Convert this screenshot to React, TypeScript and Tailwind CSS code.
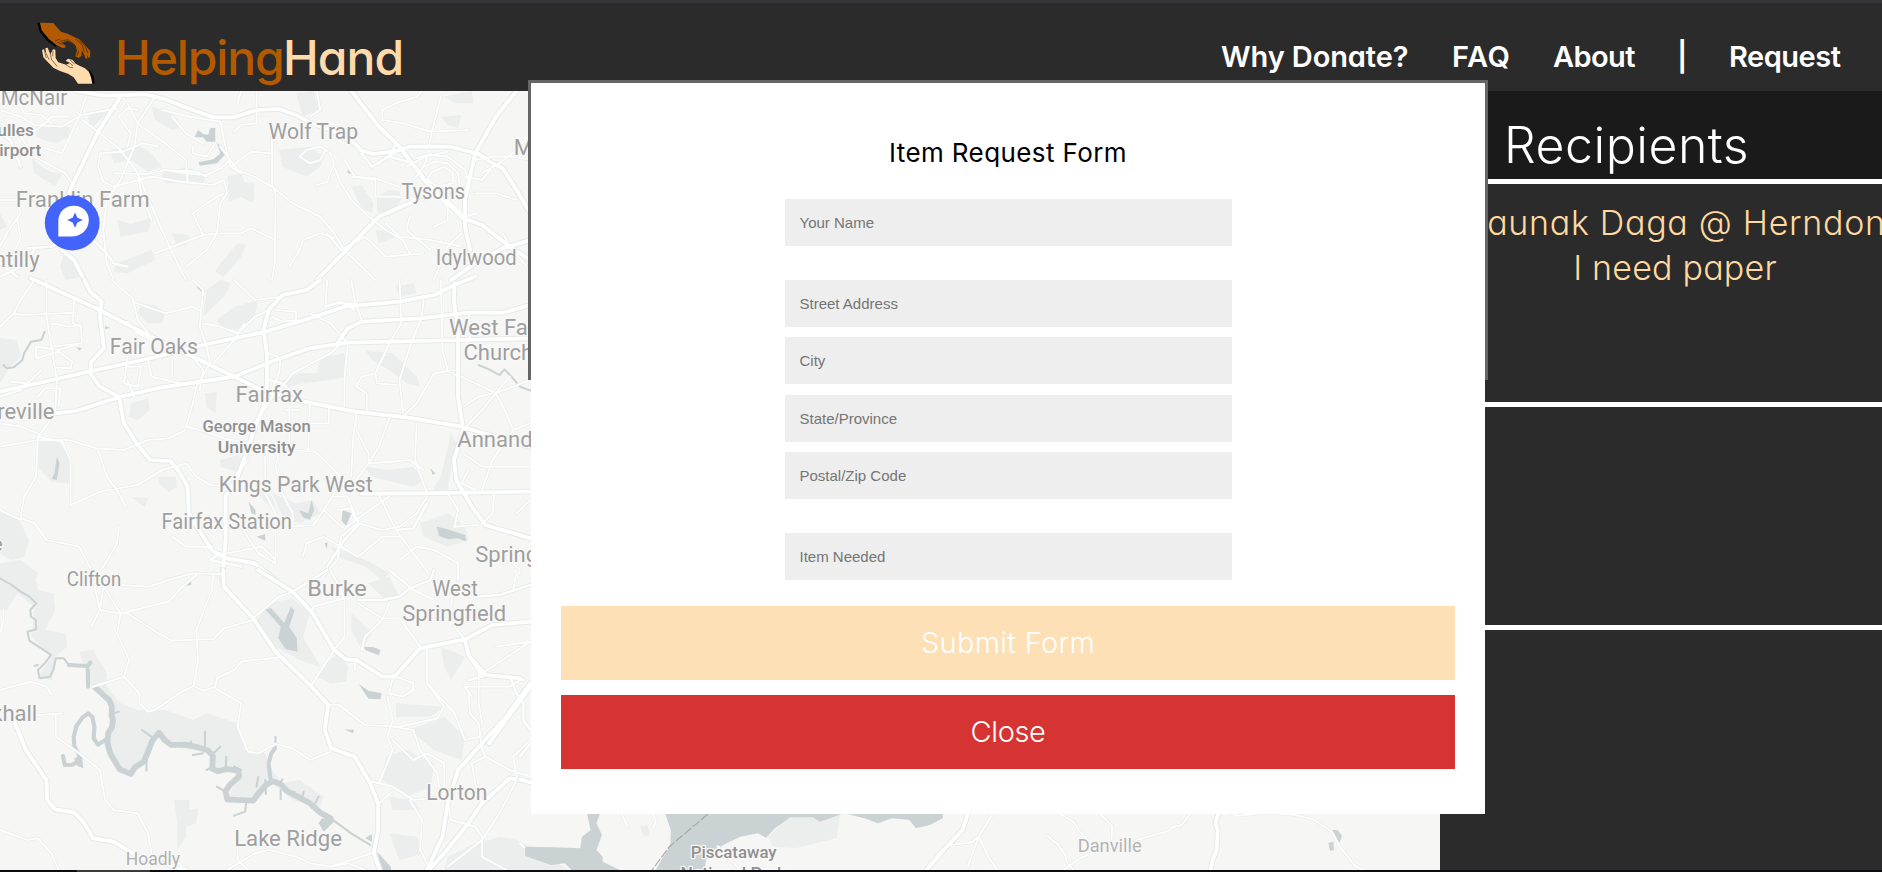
import React from "react";

const QUICK = "font-['Inter','Lato',sans-serif] [font-feature-settings:'cv11'_1,'ss03'_1]";

type LabelProps = {
  x: number;
  y: number;
  w?: number;
  size?: number;
  end?: boolean;
  strong?: boolean;
  fill?: string;
  children: string;
};

function Label({ x, y, w, size = 64, end, strong, fill, children }: LabelProps) {
  return (
    <text
      x={x}
      y={y}
      textLength={w}
      lengthAdjust="spacingAndGlyphs"
      textAnchor={end ? "end" : "start"}
      fontFamily="Roboto, 'Liberation Sans', sans-serif"
      fontSize={size}
      fontWeight={strong ? 500 : 400}
      fill={fill ?? (strong ? "#8f8f8f" : "#9f9f9f")}
      stroke="#f8f8f7"
      strokeWidth={8}
      strokeLinejoin="round"
      paintOrder="stroke"
    >
      {children}
    </text>
  );
}

type TileProps = {
  x?: number;
  y: number;
  sx?: number;
  parks?: string;
  water?: string;
  rivers?: string;
  creeks?: string;
  streams?: string;
  minor: string;
  mid?: string;
  major: string;
};

function Tile({ x = 0, y, sx = 0.34439, parks, water, rivers, creeks, streams, minor, mid, major }: TileProps) {
  return (
    <g
      transform={`translate(${x} ${y}) scale(${sx} 0.33333)`}
      fill="none"
      strokeLinejoin="round"
      strokeLinecap="round"
    >
      {parks && <path d={parks} fill="#ebeeed" />}
      {water && <path d={water} fill="#cad2d3" />}
      {rivers && <path d={rivers} stroke="#cad2d3" strokeWidth={17} />}
      {creeks && <path d={creeks} stroke="#cad2d3" strokeWidth={12} />}
      {streams && <path d={streams} stroke="#cad2d3" strokeWidth={6} />}
      <path d={minor} stroke="#e9edec" strokeWidth={9} />
      {mid && <path d={mid} stroke="#e7ebea" strokeWidth={12} />}
      <path d={major} stroke="#e5eae9" strokeWidth={17} />
      <path d={minor} stroke="#ffffff" strokeWidth={5} />
      {mid && <path d={mid} stroke="#ffffff" strokeWidth={7} />}
      <path d={major} stroke="#ffffff" strokeWidth={11} />
    </g>
  );
}

function MapView() {
  return (
    <svg className="block h-full w-full" viewBox="0 91 1440 779" preserveAspectRatio="none">
      <rect x="0" y="91" width="1440" height="779" fill="#f6f6f4" />

      <Tile
        y={0}
        parks="M105 380L150 370 205 385 200 410 165 430 140 425 105 410Z M90 470L120 500 145 515 180 520 160 560 130 540 100 520Z M255 350L300 325 310 340 265 385Z M320 450L400 435 440 460 470 500 430 515 380 480 330 490Z M440 320L500 340 530 380 500 390 450 360Z M470 520L540 500 600 520 590 550 480 550Z M660 530L700 520 710 545 740 550 735 610 700 590 665 605Z M810 450L900 440 940 470 930 500 890 530 820 500Z M860 280L910 273 925 330 880 350Z M1020 560L1050 555 1085 610 1080 640 1050 625Z M1095 590L1130 570 1160 572 1165 600 1130 650 1095 635Z M1290 290L1370 273 1375 310 1320 310Z M1280 350L1340 345 1330 385 1300 375Z M640 790L690 730 715 735 700 770 650 830 625 815Z M340 660L380 672 440 655 430 695 350 710Z M340 790L440 750 450 780 370 820 330 815Z M500 700L550 705 540 735 515 740Z M0 640L20 680 0 690Z M185 760L215 780 240 830 190 840 175 800Z M1090 690L1140 690 1150 710 1100 730Z"
        water="M575 390L590 402 605 405 610 385 625 383 625 425 600 425 590 412 565 412Z M630 430L645 440 655 462 630 490 580 497 577 487 620 478 640 460Z M1010 510L1024 514 1020 522 1010 520Z M103 470L114 473 110 480Z"
        minor="M0 330L60 350 100 375 180 380 235 345 340 325 M5 370L50 400 90 400 130 370 150 350 200 350 M50 300L70 340 120 345 150 370 M0 380L60 410 100 470 190 520 215 560 M115 440L180 460 230 350 250 290 M240 360L290 400 350 450 400 520 470 690 520 800 540 840 M290 460L355 455 415 430 460 440 M290 460L285 500 300 545 330 560 440 530 520 545 620 555 650 540 M450 290L400 370 390 440 350 540 310 600 300 690 310 790 330 840 M470 330L550 350 640 365 650 420 670 500 700 520 M400 330L370 325 345 350 380 400 370 440 M745 273L745 370 700 375 680 395 M790 380L790 550 800 580 798 790 790 840 M670 500L730 455 790 460 M640 440L690 510 740 530 790 560 850 610 930 650 970 700 1000 750 1050 800 1090 840 M330 520L430 522 480 510 540 520 600 525 640 505 670 480 M400 520L410 580 440 660 M650 540L660 580 640 610 630 700 M630 700L590 705 500 740 450 760 M640 700L700 700 730 685 800 720 M870 470L890 450 930 440 960 460 970 490 950 545 920 555 M870 470L900 490 930 480 945 450 M970 500L990 550 1020 600 1070 650 1120 690 1170 720 1190 760 M1020 530L1090 540 1090 590 1150 590 1230 600 M1000 480L1030 530 1090 535 1160 560 M920 273L930 330 900 350 M1110 360L1110 330 1150 310 1210 290 1225 273 M1110 360L1170 370 1250 395 1360 390 M1280 290L1260 370 1245 440 M1210 475L1240 465 1300 470 1350 510 1365 560 M1230 500L1260 485 1300 490 1330 520 1335 560 1310 580 M1255 515L1290 500 1315 520 1315 550 1270 560 1240 540Z M1180 500L1235 470 1300 455 M1200 540L1230 500 1240 470 M1260 570L1300 620 1300 660 1260 680 M1380 480L1430 470 1490 470 1540 480 M1400 520L1450 490 1500 450 1540 400 M1380 580L1440 580 1500 600 M1385 640L1350 650 1300 600 M1350 530L1400 540 1430 500 M950 700L990 750 1060 710 1120 770 1230 760 M1120 670L1160 710 1250 720 1340 740 M1190 650L1180 690 1250 750 M840 800L870 750 880 720 930 700 970 715 M590 705L560 640 600 610 650 580 M0 600L50 600 60 640 20 700 0 740 M50 660L60 710 40 760 M1260 840L1300 740 1340 700 M540 800L600 750 630 700 M700 273L690 310 M370 310L400 370 480 430 540 480 545 550 M560 440L560 460 600 470 625 430 M500 350L540 400 590 430 M470 510L570 515 600 530 M1460 700L1480 740 1530 800"
        mid="M0 400L30 420 60 500 M260 710L310 760 330 790 370 800 M80 745L150 740 190 720 M1050 460L1080 500 1160 450 M1150 430L1130 470 1200 490 1230 530 M100 750L60 800 0 830 M0 790L50 830"
        major="M220 272L300 287 420 283 480 298 560 330 620 352 680 352 745 330 810 327 860 345 900 368 960 390 1030 430 1050 452 1085 462 1140 455 1190 440 1310 440 1390 462 1430 490 1460 505 1500 570 1540 640 M350 290L285 395 210 555 190 610 M1020 273L1100 380 1160 440 1240 550 1290 600 1345 655 1400 675 1480 740 1540 780 M1500 273L1440 350 1380 460 1350 600 1350 680 1365 750 M920 840L1100 650 1210 600 M180 750L215 780 245 840 M1310 840L1380 790 1460 745 1540 720"
      />

      <Tile
        y={280}
        parks="M0 175L50 180 60 230 30 260 0 310Z M410 70L450 75 480 100 470 130 430 130 400 100Z M600 30L640 0 670 10 650 50 620 80 590 110Z M630 120L680 80 750 60 740 110 690 150 640 140Z M930 235L1000 220 1010 290 960 300 880 310 840 320 800 310 870 280 920 280Z M1060 210L1140 220 1210 290 1220 320 1180 310 1130 270 1080 240Z M595 340L630 335 625 400 600 380Z M380 370L430 355 435 390 400 420 375 410Z M110 480L165 478 200 530 200 610 150 605 108 560Z M640 540L690 525 705 540 700 580 640 560Z M460 590L510 590 515 620 490 635 460 610Z M380 650L430 655 420 680Z M0 690L50 710 85 780 70 830 30 840 0 820Z M0 850L60 840 110 880 100 905 0 905Z M790 640L860 670 910 660 930 700 870 730 820 710Z M1060 560L1130 570 1200 560 1230 600 1200 620 1080 590Z M1310 460L1325 490 1310 560 1300 630 1250 640 1280 590Z M1220 730L1300 700 1350 740 1360 780 1300 800 1230 770Z M960 800L1020 820 1080 850 1130 880 1110 900 1060 860 980 830Z M1150 20L1200 10 1210 40 1160 50Z M740 620L790 650 800 680 770 670Z"
        water="M570 15L595 32 590 38 572 24Z M165 530L173 550 165 600 150 597 158 580Z M722 665L742 690 742 705 730 700Z M868 690L895 700 905 660 912 690 900 720 880 712Z M995 690L1020 700 1005 738 992 722Z M1268 740L1300 748 1350 765 1355 785 1330 775 1300 778 1275 768Z M745 770L770 762 770 782Z M943 790L952 787 948 808Z M305 138L320 143 305 148Z M222 202L238 204 230 212Z M1250 565L1264 580 1256 585Z"
        streams="M130 155L120 180 90 185 70 220 65 240 40 262 20 265 10 255 M1390 255L1420 268 1450 285 1465 268 1485 290 1510 320 1540 332"
        minor="M100 0L60 60 40 100 70 105 220 98 M0 140L40 100 M135 0L135 110 165 300 160 400 110 470 105 590 70 650 60 710 M215 60L212 130 235 140 238 190 150 200 M150 130L200 140 235 135 M105 200L105 235 170 215 210 245 205 265 160 262 M105 200L170 210 220 195 M325 0L385 55 400 120 430 160 M385 65L480 100 560 80 585 95 M560 0L590 30 580 140 600 200 610 250 570 320 560 370 540 440 M370 125L400 160 440 180 M680 0L740 60 820 50 M590 130L640 140 690 160 740 110 780 90 M620 250L680 180 710 130 M950 0L945 80 M1020 0L1030 60 1050 120 M980 70L1030 70 M900 100L960 130 1010 190 1000 300 1000 380 M1160 0L1165 130 1130 190 1090 280 1050 290 1035 320 1065 340 1065 390 M1090 280L1095 310 1155 315 M1230 60L1225 110 1190 200 1160 300 1170 400 M1280 0L1285 210 1300 270 1330 290 M1170 410L1210 370 1260 280 1320 270 M810 330L850 280 960 220 990 190 M780 220L815 235 810 280 790 330 M900 375L895 510 M955 385L955 430 900 430 M1035 400L1025 480 1020 590 M1130 415L1100 500 1070 550 1140 545 1190 540 1230 570 M1210 430L1205 540 1240 640 M1035 450L1070 520 1070 550 1020 620 970 640 M840 380L840 510 915 515 980 580 1000 620 M830 390L870 390 M540 440L580 450 650 475 720 490 800 530 M0 500L110 480 200 480 280 505 360 510 430 480 490 475 540 450 M0 430L60 440 110 460 M110 470L180 485 205 540 205 680 M205 675L290 635 400 615 470 570 540 550 570 590 610 615 650 618 M285 510L310 590 340 630 365 680 M60 715L100 730 135 780 230 800 280 900 M0 690L60 720 M345 740L340 790 300 860 270 890 M500 770L540 800 600 800 640 830 M660 820L760 800 800 840 M550 730L600 740 650 720 M770 530L770 640 800 700 800 760 M810 520L800 560 820 640 M820 640L850 700 850 740 910 735 940 690 970 640 M970 650L1010 650 1040 730 990 770 980 840 930 900 M980 690L1020 685 1030 720 M940 690L980 730 1000 745 1060 700 1130 650 M1100 645L1150 750 1200 820 1260 900 M1040 730L1110 750 1160 740 1210 700 1240 650 M800 700L800 850 750 820 700 740 M880 830L890 790 940 770 990 800 1040 830 1110 770 1160 770 M1160 840L1210 800 1260 810 1330 850 1330 900 M1345 450L1400 390 1440 340 1480 290 M1340 290L1440 340 1470 400 1490 450 1430 540 1400 630 M1440 340L1540 300 M1345 380L1390 350 1430 340 M1490 450L1540 430 M1345 520L1400 560 1540 560 M1360 570L1340 610 1380 630 M1435 640L1430 700 1400 730 M1540 660L1500 700 M1300 640L1330 690 1320 740 1390 735 M1470 830L1510 870 1500 900 M370 230L360 310 400 320 410 260 370 260 M430 240L440 290 520 310 580 310 M500 240L500 290 M550 220L590 270 580 330 M370 300L390 350 M110 350L130 325 175 325 170 380 M30 305L80 310 120 270 M480 900L560 880 640 885 M800 90L860 95 860 120 820 125 790 110 M680 590L720 540 M1360 100L1370 160 1350 200"
        mid="M0 350L60 330 M740 430L780 370 800 330 M780 300L820 310 870 360 M945 80L990 65 1030 90 M640 820L610 840 700 860 M1150 750L1200 745 1240 670 M950 860L1000 780 1040 735"
        major="M90 -5L280 85 420 160 550 225 680 290 760 330 870 362 1030 395 1180 412 1340 440 1540 500 M0 335L160 298 280 270 450 232 590 195 770 155 900 115 1000 80 1160 65 1260 45 1330 10 1380 -10 M160 400L220 393 350 350 470 322 680 290 800 240 900 205 1010 188 1330 180 1540 175 M980 190L1010 145 1050 125 1220 115 1360 98 1460 98 1540 75 M245 0L262 35 295 65 290 110 302 205 265 245 262 280 290 320 345 350 360 430 400 495 435 540 495 543 520 575 545 620 548 700 590 770 620 815 660 835 740 850 800 900 M930 0L890 30 820 45 780 90 765 150 775 220 775 330 765 380 745 430 715 520 690 590 655 650 655 780 645 900 M1320 10L1318 60 1330 160 1330 350 1345 450 1318 540 1325 600 1370 680 1410 735 1540 775 M1050 641L1240 640 1340 638 1540 635"
      />

      <Tile
        y={570}
        parks="M0 30L60 0 100 10 110 60 155 70 160 120 130 180 190 190 195 230 160 260 150 330 110 320 150 260 90 200 100 110 50 70 20 120 0 120Z M230 245L270 240 310 310 310 350 350 400 400 420 480 420 560 450 600 430 690 460 710 540 770 550 790 600 820 640 870 630 940 680 930 710 850 690 790 640 740 700 660 700 690 610 620 610 610 550 500 530 465 490 430 530 420 580 380 620 340 600 310 520 325 400 260 340Z M740 160L780 100 850 85 900 130 880 200 930 290 870 270 800 230Z M930 300L980 250 1010 290 1005 335 960 340 920 320Z M1120 560L1180 540 1260 580 1250 650 1180 680 1110 630Z M1190 480L1290 440 1350 500 1340 570 1260 540Z M505 690L550 690 550 720 575 715 570 760 540 770 540 800 515 840 515 760Z M1070 40L1120 90 1160 80 1130 20Z M1020 130L1080 190 1050 240 1020 180Z M1280 230L1350 260 1310 330 1290 290Z M1130 790L1210 800 1230 850 1160 870Z M1300 860L1400 810 1540 830 1542 905 1290 905Z M1150 400L1290 410 1250 440 1150 440Z M1130 680L1200 690 1220 720 1140 720Z M1390 820L1450 800 1500 810 1540 830Z"
        water="M770 118L787 115 825 158 845 110 855 122 840 170 862 205 864 245 830 238 808 205 815 170Z M1058 230L1085 232 1105 240 1100 256 1060 240Z M1042 343L1070 362 1108 370 1105 388 1070 386Z M555 25L555 45 538 47Z M1000 478L1028 480 1025 490Z M1095 845L1135 890 1135 905 1110 905Z M1524 832L1568 832 1568 870 1524 860Z M935 745L975 750 940 785 925 760Z M1060 805L1080 792 1080 815Z M215 565L238 560 242 595 225 588Z"
        rivers="M276 352L297 372 318 392 325 410 324 435 328 450 325 472 314 490 312 520 320 550 334 575 348 598 380 612 392 592 418 574 430 545 442 512 462 488 478 510 497 525 540 524 575 532 604 541 618 558 616 596 632 604 660 597 692 602 694 620 668 644 655 664 660 688 695 690 735 692 752 668 772 645 792 634 815 642 832 662 865 680 900 700 930 728 960 745"
        creeks="M308 508L285 524 272 505 274 470 268 440 256 430 240 442 222 468 214 500 216 530 230 555 228 574 210 584 188 585 183 558 M785 625L780 580 788 550 798 535 M200 285L255 288 262 278 M255 300L256 350"
        streams="M0 25L30 42 60 65 85 80 105 100 88 120 90 140 104 150 105 178 80 185 85 212 120 235 148 255 130 280 110 300 115 325 145 320 155 300 162 265 185 265 200 285 M960 745L1020 790 1075 825 M715 695L712 725 680 737 M595 540L595 485 M655 600L657 560 M560 555L590 550 M426 560L425 602 M770 630L772 672 M750 620L745 650 M875 690L882 665 M412 480L440 500 M915 700L925 680 M800 500L800 530 M110 285L100 288 M345 425L330 430 M600 600L620 590 M630 650L655 665 M815 660L815 688 M640 530L620 550 M820 628L810 645 M700 600L680 590 M855 665L850 680 M555 515L545 530"
        minor="M350 45L430 50 490 30 560 10 640 12 M300 55L290 120 345 130 370 130 460 190 500 212 620 207 650 175 735 150 M265 170L290 120 275 50 M300 50L350 130 340 190 375 270 360 320 270 350 M350 130L490 95 530 50 570 15 M620 10L615 60 570 180 575 270 562 345 M360 320L405 370 405 400 430 425 450 420 520 370 562 348 590 362 625 350 630 325 680 300 700 275 810 262 M625 355L700 400 690 470 720 545 750 550 800 522 850 535 900 570 960 545 M0 360L90 335 135 350 150 375 M110 435L180 430 M162 435L162 500 230 550 290 600 305 690 330 720 400 730 430 790 440 850 M0 780L80 810 110 805 150 850 170 900 M10 120L10 150 0 190 M560 350L565 340 M740 140L810 80 850 65 880 45 M905 125L910 110 1000 85 1000 200 970 240 905 345 M950 405L985 405 1060 465 1160 470 1270 445 1290 410 1240 340 1240 235 M1140 325L1130 370 1170 380 1200 360 1200 340 1150 320 M1125 380L1140 450 1125 500 1140 540 1100 640 M1140 470L1200 480 1220 540 1270 610 1275 650 M1140 510L1200 570 1240 550 1290 580 1290 680 1200 690 1140 650 1080 635 M1100 700L1140 665 M1190 690L1225 750 1220 840 1250 900 M1240 340L1320 430 1350 510 1395 500 M1360 370L1365 430 1390 460 1400 540 1410 560 1480 600 1540 620 M1440 230L1540 215 1430 290 1400 310 M1350 350L1480 350 1510 330 M1370 380L1350 350 M1390 300L1390 400 1400 460 M1540 510L1490 560 1500 620 M1410 560L1370 580 1380 640 1400 700 M1300 700L1310 750 1380 770 1400 800 1400 860 1470 900 M1300 890L1400 810 1450 730 1500 630 M1040 100L1110 145 1160 145 1220 230 M1030 270L1030 300 M1050 240L1060 200 1110 150 1130 100 M960 0L990 60 1000 90 M1130 0L1200 60 1260 90 M1380 80L1360 140 1320 170 1350 208 M1500 0L1490 60 M1320 50L1310 100 M690 840L690 870 720 900 M660 900L740 850 780 840 860 860 900 880 960 890 1080 850 M500 860L530 890 M960 890L1010 880 1060 900"
        mid="M1380 80L1450 75 1540 45 M1040 90L1110 90 1160 80 1190 55 1250 30 1260 0 M950 0L890 40 850 65 M1520 330L1480 320 1500 370 1520 400 1520 450 1540 480 M1360 255L1400 320 1360 330"
        major="M648 0L650 50 735 145 800 245 900 345 953 405 943 480 962 535 1030 560 1075 640 1098 700 1098 780 1085 850 1105 905 M750 0L850 65 905 125 970 240 1005 268 1035 270 1110 320 1145 320 1220 235 1350 208 1430 165 1540 155 M1350 208L1360 255 1410 315 1510 325 M1540 340L1470 440 1330 600 1300 700 1285 800 1240 900 M1540 350L1420 520 M40 450L75 540 135 630 137 690 160 718 215 727 245 760 270 805 330 815 400 860 540 900 M1250 895L1290 850 1360 760 1400 700 1480 625 1540 635"
      />

      <Tile
        x={520}
        y={740}
        parks="M720 290L780 230 930 220 920 295 800 325 735 320Z M0 300L30 350 110 370 150 396 0 396Z M350 260L370 255 377 285 357 290Z"
        water="M422 222L935 222 900 235 870 245 850 232 785 232 740 265 715 293 690 280 640 290 600 310 565 330 540 360 535 396 390 396 437 315 438 270Z M195 222L232 222 222 250 238 285 222 330 240 350 240 365 290 390 150 390 130 370 90 375 15 348 15 320 100 322 175 325 180 290 205 270Z M950 222L1228 222 1228 235 1190 255 1150 265 1130 240 1080 235 1040 250 1000 235Z"
        minor="M295 222L312 260 M385 222L395 240 387 265 M1250 315L1310 308 1332 290 1370 225 M1332 290L1300 380 M1332 290L1360 350 1385 390 M575 320L640 390 M1535 288L1568 320 M0 310L12 322"
        mid="M0 50L30 10"
        major="M1300 222L1285 270 1230 330 1180 390 M0 118L32 128"
      />
      <path d="M708 814L670 846 658 862 652 870" fill="none" stroke="#a9a9aa" strokeWidth="1.2" strokeDasharray="9 2" />

      <Tile
        x={1040}
        y={740}
        sx={0.33333}
        water="M875 270L893 270 906 288 898 310 885 298Z M865 308L880 305 882 330 870 332Z"
        minor="M55 220L100 245 120 275 145 300 M180 220L216 258 215 300 M285 302L340 285 382 275 398 262 425 255 450 222 M22 287L55 315 75 345 80 365 100 390 M70 390L120 355 165 335 M575 220L590 228 680 218 760 224 820 238 875 275 900 320 945 378 970 390"
        major="M535 220L526 250 533 270 530 330 518 360 510 396"
      />

      <g transform="scale(0.34439 0.33333)">
        <Label x={2} y={314} w={193}>McNair</Label>
        <Label x={98} y={408} size={50} end strong>Dulles</Label>
        <Label x={120} y={468} size={50} end strong>Airport</Label>
        <Label x={780} y={418} w={260}>Wolf Trap</Label>
        <Label x={1492} y={464}>McLean</Label>
        <Label x={1166} y={597} w={184}>Tysons</Label>
        <Label x={46} y={622} w={389}>Franklin Farm</Label>
        <Label x={115} y={800} end>Chantilly</Label>
        <Label x={1265} y={796} w={235}>Idylwood</Label>
      </g>
      <g transform="translate(0 280) scale(0.34439 0.33333)">
        <Label x={319} y={221} w={256}>Fair Oaks</Label>
        <Label x={1304} y={165}>West Falls</Label>
        <Label x={1346} y={241}>Church</Label>
        <Label x={684} y={367} w={196}>Fairfax</Label>
        <Label x={158} y={416} end>Centreville</Label>
        <Label x={588} y={455} w={314} size={52} strong>George Mason</Label>
        <Label x={632} y={518} w={226} size={52} strong>University</Label>
        <Label x={635} y={635} w={447}>Kings Park West</Label>
        <Label x={469} y={747} w={379}>Fairfax Station</Label>
        <Label x={1328} y={502}>Annandale</Label>
        <Label x={1380} y={847}>Springfield</Label>
        <Label x={8} y={812} size={60} end>Centreville</Label>
      </g>
      <g transform="translate(0 570) scale(0.34439 0.33333)">
        <Label x={194} y={49} w={158} size={59}>Clifton</Label>
        <Label x={892} y={78} w={173}>Burke</Label>
        <Label x={1255} y={78} w={133}>West</Label>
        <Label x={1168} y={152} w={302}>Springfield</Label>
        <Label x={108} y={452} end>Buckhall</Label>
        <Label x={1238} y={689} w={177}>Lorton</Label>
        <Label x={680} y={828} w={313}>Lake Ridge</Label>
        <Label x={365} y={886} w={158} size={56} fill="#b0b0b0">Hoadly</Label>
      </g>
      <g transform="translate(520 740) scale(0.34439 0.33333)">
        <Label x={496} y={353} w={249} size={52} strong>Piscataway</Label>
        <Label x={466} y={416} w={307} size={52} strong>National Park</Label>
      </g>
      <g transform="translate(1040 740) scale(0.33333)">
        <Label x={113} y={336} w={192} size={57} fill="#b4b4b4">Danville</Label>
      </g>

      <ellipse cx="72.2" cy="223" rx="27.4" ry="27.4" fill="#4264fb" />
      <path d="M58.3 236.5V221.5C58.3 212 65 205.8 74 205.8C82.5 205.8 88.8 212 88.8 220C88.8 229 81.5 236.5 71.5 236.5Z" fill="#fff" />
      <path d="M75 212.4L77.4 217.8 82.8 220.1 77.4 222.4 75 227.8 72.6 222.4 67.2 220.1 72.6 217.8Z" fill="#4264fb" />
    </svg>
  );
}

function HandsLogo() {
  return (
    <svg className="block h-[62px] w-[58px]" viewBox="52 37 174 186">
      <path d="M53 39L61 39 70 66 90 90 112 110 108 112 80 92 60 66Z" fill="#050505" />
      <path d="M61 39L101 40 111 52 124 66 146 73 168 84 181 90 194 104 206 117 212 124 211 142 206 145 201 134 203 146 198 148 192 132 186 122 186 138 177 145 167 140 172 122 168 108 157 100 144 93 135 96 126 99 138 108 136 114 128 115 112 107 102 99 88 88 76 74 66 62Z" fill="#b35a00" />
      <path d="M122 95L145 90 165 105M128 104L113 97M168 88L187 105 194 127M179 91L198 110 204 130M106 94L120 88M177 123L172 139" fill="none" stroke="#3b1e02" strokeWidth="2" />
      <path d="M210 180L222 200 225 222 216 222 206 192Z" fill="#050505" />
      <path d="M67 121L73 119 80 134 77 115 84 114 92 134 100 119 107 120 108 146 116 158 139 165 151 160 138 153 145 147 159 151 168 162 181 169 196 176 208 187 214 203 218 222 175 222 162 203 145 192 121 184 101 174 85 158 71 143Z" fill="#ffdcae" />
      <path d="M80 132L88 150M92 132L96 152M74 122L80 145M100 124L99 140M139 165L151 173 160 174M150 160L160 168M98 152L112 170M151 151L165 163" fill="none" stroke="#4e3d2a" strokeWidth="2" />
    </svg>
  );
}

const navText = `${QUICK} text-[29px] font-semibold leading-[36px] text-white whitespace-nowrap`;

function Header() {
  return (
    <header className="flex h-[91px] shrink-0 items-start border-t-[3px] border-[#35363a] bg-[#2b2b2b] pl-[37px]">
      <div className="mt-[19px]">
        <HandsLogo />
      </div>
      <div className={`${QUICK} mt-[25px] ml-[20px] flex text-[48px] leading-[60px] font-medium whitespace-nowrap`}>
        <span className="w-[168px] tracking-[-1.1px] text-[#b35a00]">Helping</span>
        <span className="tracking-[-0.9px] text-[#ffdaab]">Hand</span>
      </div>
      <nav className="mt-[36px] ml-auto flex">
        <a className={`${navText} w-[231px] tracking-[-0.1px]`}>Why Donate?</a>
        <a className={`${navText} w-[101px] tracking-[0.6px]`}>FAQ</a>
        <a className={`${navText} w-[124px] tracking-[-0.6px]`}>About</a>
        <span className={`${navText} w-[52px]`}>|</span>
        <a className={`${navText} w-[153px] tracking-[-0.5px]`}>Request</a>
      </nav>
    </header>
  );
}

function Recipients() {
  return (
    <aside className="flex w-[442px] shrink-0 flex-col overflow-hidden bg-[#2b2b2b]">
      <div className={`${QUICK} h-[93px] shrink-0 border-b-[5px] border-white bg-[#1a1a1a] pt-[22px] pl-[64px] text-[50px] leading-[64px] font-[350] tracking-[0.5px] text-white`}>
        Recipients
      </div>
      <div className={`${QUICK} flex h-[223px] shrink-0 flex-col items-center border-b-[5px] border-white pt-[16px] pl-[28px] text-[34px] leading-[45px] font-[350] text-[#ffd9a0]`}>
        <div className="mr-[20px] tracking-[0.7px] whitespace-nowrap">Shaunak Daga @ Herndon</div>
        <div className="tracking-[0.2px] whitespace-nowrap">I need paper</div>
      </div>
      <div className="h-[223px] shrink-0 border-b-[5px] border-white" />
    </aside>
  );
}

function Field({ placeholder, className }: { placeholder: string; className: string }) {
  return (
    <input
      placeholder={placeholder}
      className={`${className} block h-[47px] w-[447px] shrink-0 bg-[#eeeeee] px-[15px] font-['Liberation_Sans',Arial,sans-serif] text-[15px] outline-none placeholder:text-[#757575]`}
    />
  );
}

function RequestModal() {
  return (
    <div className="absolute top-[80px] left-[528px] h-[300px] w-[960px] border-[3px] border-[#666666]">
      <form className="flex h-[731px] w-[954px] flex-col items-center bg-white px-[30px] pt-[52px]">
        <h2 className={`${QUICK} text-[26px] leading-[36px] tracking-[0.4px] whitespace-nowrap text-black`}>Item Request Form</h2>
        <Field placeholder="Your Name" className="mt-[28px]" />
        <Field placeholder="Street Address" className="mt-[34px]" />
        <Field placeholder="City" className="mt-[10px]" />
        <Field placeholder="State/Province" className="mt-[11px]" />
        <Field placeholder="Postal/Zip Code" className="mt-[10px]" />
        <Field placeholder="Item Needed" className="mt-[34px]" />
        <button type="button" className={`${QUICK} mt-[26px] h-[74px] w-full shrink-0 bg-[#fee0b6] text-[29px] font-[350] tracking-[0.3px] text-white`}>
          Submit Form
        </button>
        <button type="button" className={`${QUICK} mt-[15px] h-[74px] w-full shrink-0 bg-[#d63333] text-[29px] font-[350] tracking-[-0.4px] text-white`}>
          Close
        </button>
      </form>
    </div>
  );
}

export default function App() {
  return (
    <div className="relative flex h-[872px] w-[1882px] flex-col overflow-hidden bg-[#0c0c10]">
      <Header />
      <main className="flex h-[779px] shrink-0">
        <div className="w-[1440px] shrink-0">
          <MapView />
        </div>
        <Recipients />
      </main>
      <footer className="flex h-[2px] pl-[77px]">
        <div className="w-[73px] bg-[#3a3a3a]" />
      </footer>
      <RequestModal />
    </div>
  );
}
